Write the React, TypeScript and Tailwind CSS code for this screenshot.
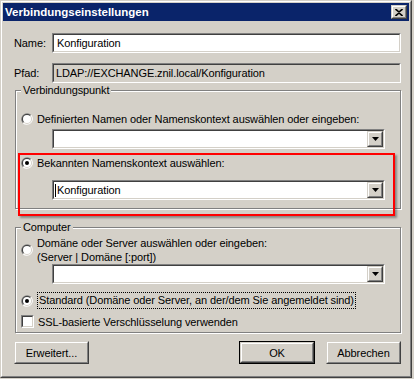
import React from "react";

function Radio({ checked }: { checked?: boolean }) {
  return (
    <svg width="12" height="12" viewBox="0 0 12 12" className="shrink-0">
      <path d="M1.76 10.24 A6 6 0 0 1 10.24 1.76 L6 6 Z" fill="#808080" />
      <path d="M10.24 1.76 A6 6 0 0 1 1.76 10.24 L6 6 Z" fill="#ffffff" />
      <path d="M2.46 9.54 A5 5 0 0 1 9.54 2.46 L6 6 Z" fill="#404040" />
      <path d="M9.54 2.46 A5 5 0 0 1 2.46 9.54 L6 6 Z" fill="#D4D0C8" />
      <circle cx="6" cy="6" r="4" fill="#ffffff" />
      {checked && <circle cx="6" cy="6" r="2" fill="#000000" />}
    </svg>
  );
}

function Sunken({
  children,
  bg = "bg-white",
  className = "",
}: {
  children?: React.ReactNode;
  bg?: string;
  className?: string;
}) {
  return (
    <div
      className={
        "h-[20px] border border-t-[#808080] border-l-[#808080] border-r-white border-b-white " +
        className
      }
    >
      <div
        className={
          "h-full border border-t-[#404040] border-l-[#404040] border-r-[#D4D0C8] border-b-[#D4D0C8] flex items-center " +
          bg
        }
      >
        {children}
      </div>
    </div>
  );
}

function Raised({
  children,
  className = "",
}: {
  children?: React.ReactNode;
  className?: string;
}) {
  return (
    <div
      className={
        "border border-t-[#D4D0C8] border-l-[#D4D0C8] border-r-[#404040] border-b-[#404040] " +
        className
      }
    >
      <div className="w-full h-full border border-t-white border-l-white border-r-[#808080] border-b-[#808080] bg-[#D4D0C8] flex items-center justify-center">
        {children}
      </div>
    </div>
  );
}

function Combo({ text, caret }: { text?: string; caret?: boolean }) {
  return (
    <Sunken className="ml-[36px] mr-[15px]">
      <div className="flex-1 h-full flex items-center pl-[1px]">
        {caret && <div className="w-[1px] h-[13px] bg-black mr-[1px]" />}
        <span>{text}</span>
      </div>
      <Raised className="w-[16px] h-full">
        <svg width="7" height="4" viewBox="0 0 7 4">
          <path d="M0 0 H7 L3.5 4 Z" fill="#000" />
        </svg>
      </Raised>
    </Sunken>
  );
}

function Group({
  title,
  children,
  className = "",
}: {
  title: string;
  children: React.ReactNode;
  className?: string;
}) {
  return (
    <div
      className={
        "relative border border-[#808080] shadow-[inset_1px_1px_0_#ffffff,1px_1px_0_#ffffff] " +
        className
      }
    >
      <div className="absolute -top-[8px] left-[5px] px-[2px] bg-[#D4D0C8] leading-[14px]">
        {title}
      </div>
      {children}
    </div>
  );
}

export default function App() {
  return (
    <div className="w-[414px] h-[379px] bg-[#D4D0C8] text-[11px] tracking-[-0.1px] text-black font-['Liberation_Sans',Arial,sans-serif] leading-[14px]">
      <div className="w-[412px] h-[378px] border border-t-[#D4D0C8] border-l-[#D4D0C8] border-r-[#404040] border-b-[#404040]">
        <div className="h-full border border-t-white border-l-white border-r-[#808080] border-b-[#808080] p-[1px] flex flex-col">
          {/* Title bar */}
          <div className="h-[18px] bg-[#0A246A] flex items-center justify-between pl-[2px] pr-[2px]">
            <span className="text-white font-bold text-[11.5px] tracking-normal">
              Verbindungseinstellungen
            </span>
            <Raised className="w-[16px] h-[14px]">
              <svg width="8" height="7" viewBox="0 0 8 7">
                <path
                  d="M0.5 0 L4 3 L7.5 0 M0.5 7 L4 4 L7.5 7"
                  stroke="#000"
                  strokeWidth="1.6"
                  fill="none"
                />
              </svg>
            </Raised>
          </div>

          {/* Content */}
          <div className="flex-1 flex flex-col pl-[11px] pr-[8px] pt-[12px]">
            <div className="flex items-center h-[20px]">
              <div className="w-[38px]">Name:</div>
              <Sunken className="flex-1">
                <span className="pl-[3px]">Konfiguration</span>
              </Sunken>
            </div>
            <div className="flex items-center h-[20px] mt-[10px]">
              <div className="w-[38px]">Pfad:</div>
              <Sunken className="flex-1" bg="bg-[#D4D0C8]">
                <span className="pl-[2px]">
                  LDAP://EXCHANGE.znil.local/Konfiguration
                </span>
              </Sunken>
            </div>

            <Group title="Verbindungspunkt" className="mt-[7px] ml-[1px] pt-[21px] pb-[8px]">
              <div className="flex items-center gap-[4px] pl-[5px] h-[14px]">
                <Radio />
                <span>Definierten Namen oder Namenskontext auswählen oder eingeben:</span>
              </div>
              <div className="mt-[3px]">
                <Combo />
              </div>
              <div className="flex items-center gap-[4px] pl-[5px] h-[14px] mt-[7px]">
                <Radio checked />
                <span>Bekannten Namenskontext auswählen:</span>
              </div>
              <div className="mt-[10px]">
                <Combo text="Konfiguration" caret />
              </div>
              <div className="absolute left-[2px] top-[62px] w-[377px] h-[63px] border-2 border-[#FF0000] shadow-[2px_2px_2px_rgba(0,0,0,0.35)] pointer-events-none" />
            </Group>

            <Group title="Computer" className="mt-[18px] ml-[1px] pt-[8px] pb-[4px]">
              <div className="flex items-center gap-[4px] pl-[5px]">
                <Radio />
                <div className="flex flex-col">
                  <span>Domäne oder Server auswählen oder eingeben:</span>
                  <span>(Server | Domäne [:port])</span>
                </div>
              </div>
              <Combo />
              <div className="flex items-center gap-[4px] pl-[5px] h-[17px] mt-[8px]">
                <Radio checked />
                <span className="border border-dotted border-black px-[1px] leading-[15px]">
                  Standard (Domäne oder Server, an der/dem Sie angemeldet sind)
                </span>
              </div>
              <div className="flex items-center gap-[4px] pl-[5px] h-[13px] mt-[6px]">
                <div className="w-[13px] h-[13px] border border-t-[#808080] border-l-[#808080] border-r-white border-b-white shrink-0">
                  <div className="w-full h-full border border-t-[#404040] border-l-[#404040] border-r-[#D4D0C8] border-b-[#D4D0C8] bg-white" />
                </div>
                <span>SSL-basierte Verschlüsselung verwenden</span>
              </div>
            </Group>

            <div className="flex justify-between mt-[8px]">
              <Raised className="w-[75px] h-[23px]">
                <span>Erweitert...</span>
              </Raised>
              <div className="flex gap-[11px]">
                <div className="w-[76px] h-[23px] border border-black">
                  <Raised className="w-full h-full">
                    <span>OK</span>
                  </Raised>
                </div>
                <Raised className="w-[75px] h-[23px]">
                  <span>Abbrechen</span>
                </Raised>
              </div>
            </div>
          </div>
        </div>
      </div>
    </div>
  );
}
